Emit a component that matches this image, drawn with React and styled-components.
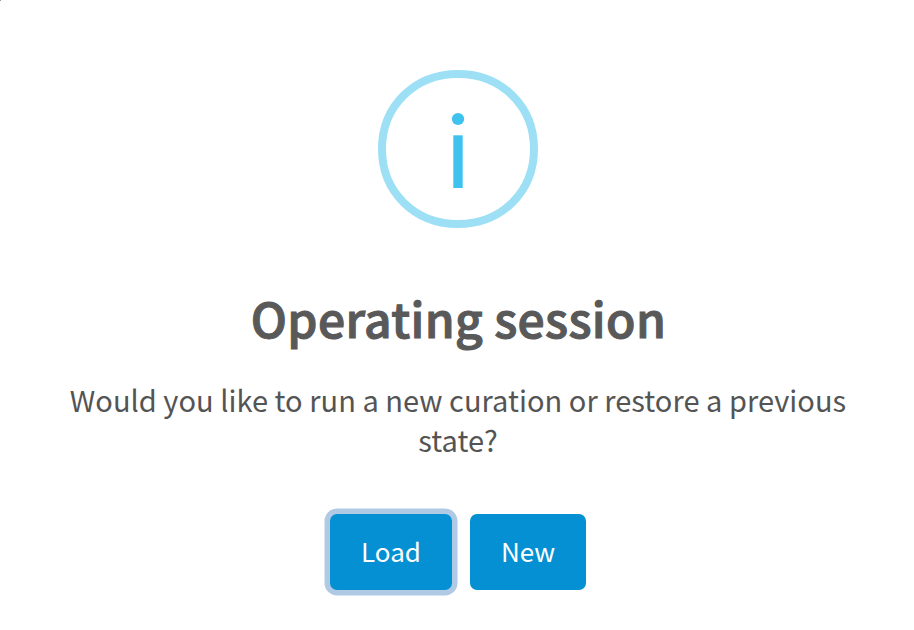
import React from "react";
import styled, { createGlobalStyle } from "styled-components";

const GlobalStyle = createGlobalStyle`
  html, body { margin: 0; background: #fff; }
  * { box-sizing: border-box; }
`;

const Dialog = styled.main`
  position: relative;
  display: flex;
  flex-direction: column;
  align-items: center;
  width: 914px;
  height: 630px;
  padding-top: 70px;
  overflow: hidden;
  background: #fff;
  color: #545454;
  font-family: "Noto Sans CJK SC", "Noto Sans", sans-serif;
`;

const Corner = styled.i`
  position: absolute;
  top: 0;
  left: 0;
  width: 1px;
  height: 1px;
  background: #999;
`;

const InfoIcon = styled.svg`
  display: block;
  width: 160px;
  height: 158px;
  flex: none;
  margin-left: 2px;
`;

const Title = styled.h2`
  margin: 55px 0 0 3px;
  color: #595959;
  font-size: 48px;
  font-weight: 500;
  line-height: 68px;
  letter-spacing: 0.34px;
  -webkit-text-stroke: 1.1px #595959;
  white-space: nowrap;
`;

const Message = styled.p`
  margin: 28px 0 0 2px;
  font-size: 29px;
  font-weight: 400;
  line-height: 40px;
  letter-spacing: 0.035px;
  text-align: center;
`;

const Line = styled.span`
  display: block;
  white-space: nowrap;
`;

const Actions = styled.div`
  display: flex;
  gap: 18px;
  margin: 55px 0 0 2px;
`;

const ActionButton = styled.button`
  width: ${(p) => p.$width}px;
  height: 76px;
  padding: 0 0 2px;
  border: 0;
  border-radius: 7px;
  background: #0490d2;
  color: #fff;
  font: 400 26px/74px "Noto Sans CJK SC", "Noto Sans", sans-serif;
  box-shadow: ${(p) => (p.$focused ? "0 0 0 5.5px #b0c9e4" : "none")};
`;

export default function App() {
  return (
    <>
      <GlobalStyle />
      <Dialog>
        <Corner />
        <InfoIcon viewBox="0 0 160 158" aria-label="Information">
          <path
            d="M80 4C123.5 4 156 36.2 156 79S123.5 154 80 154S4 121.8 4 79S36.5 4 80 4Z"
            fill="none"
            stroke="#9de0f6"
            strokeWidth="8"
          />
          <ellipse cx="80" cy="49" rx="6.2" ry="6" fill="#3fc3ee" />
          <rect x="75.3" y="65.3" width="9.4" height="52.7" fill="#3fc3ee" />
        </InfoIcon>
        <Title>Operating session</Title>
        <Message>
          <Line>Would you like to run a new curation or restore a previous</Line>
          <Line>state?</Line>
        </Message>
        <Actions>
          <ActionButton $width={122} $focused>Load</ActionButton>
          <ActionButton $width={116}>New</ActionButton>
        </Actions>
      </Dialog>
    </>
  );
}
